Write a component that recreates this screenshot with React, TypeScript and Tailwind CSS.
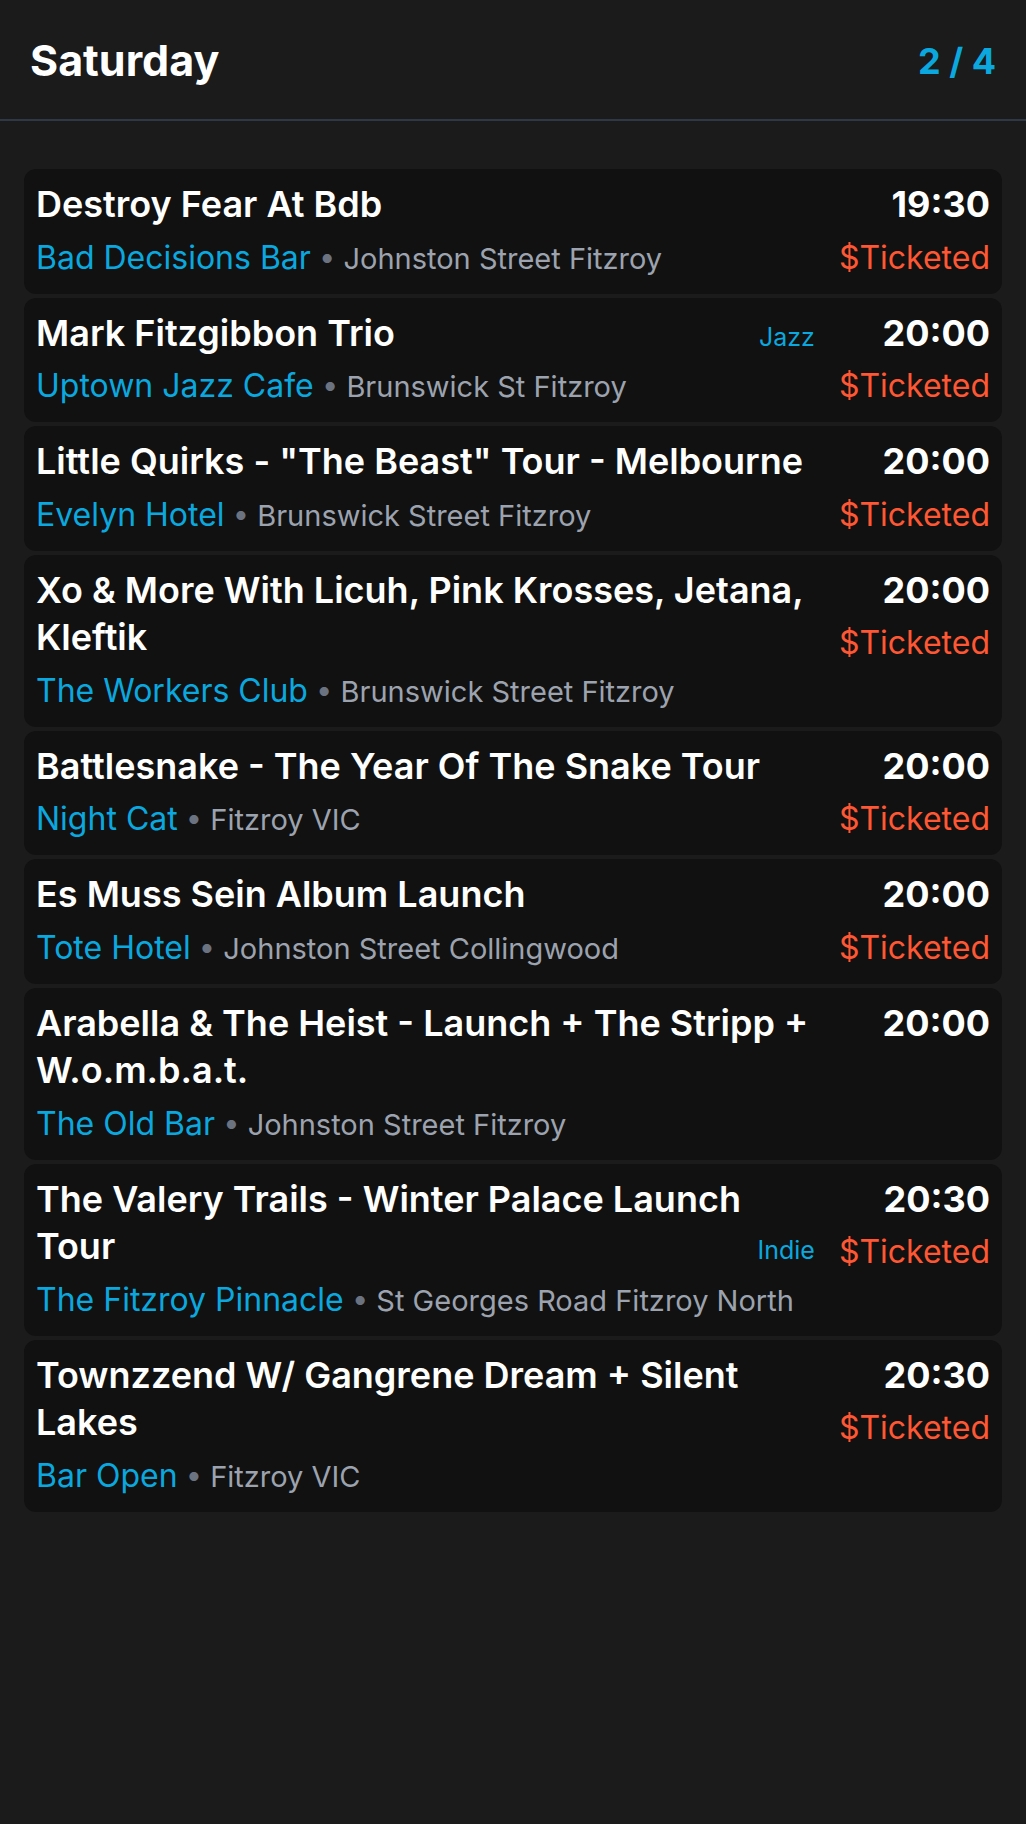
import React from "react";

interface Gig {
  title: string;
  venue: string;
  location: string;
  time: string;
  genre?: string;
  price?: string;
}

const gigs: Gig[] = [
  {
    title: "Destroy Fear At Bdb",
    venue: "Bad Decisions Bar",
    location: "Johnston Street Fitzroy",
    time: "19:30",
    price: "$Ticketed",
  },
  {
    title: "Mark Fitzgibbon Trio",
    venue: "Uptown Jazz Cafe",
    location: "Brunswick St Fitzroy",
    genre: "Jazz",
    time: "20:00",
    price: "$Ticketed",
  },
  {
    title: 'Little Quirks - "The Beast" Tour - Melbourne',
    venue: "Evelyn Hotel",
    location: "Brunswick Street Fitzroy",
    time: "20:00",
    price: "$Ticketed",
  },
  {
    title: "Xo & More With Licuh, Pink Krosses, Jetana, Kleftik",
    venue: "The Workers Club",
    location: "Brunswick Street Fitzroy",
    time: "20:00",
    price: "$Ticketed",
  },
  {
    title: "Battlesnake - The Year Of The Snake Tour",
    venue: "Night Cat",
    location: "Fitzroy VIC",
    time: "20:00",
    price: "$Ticketed",
  },
  {
    title: "Es Muss Sein Album Launch",
    venue: "Tote Hotel",
    location: "Johnston Street Collingwood",
    time: "20:00",
    price: "$Ticketed",
  },
  {
    title: "Arabella & The Heist - Launch + The Stripp + W.o.m.b.a.t.",
    venue: "The Old Bar",
    location: "Johnston Street Fitzroy",
    time: "20:00",
  },
  {
    title: "The Valery Trails - Winter Palace Launch Tour",
    venue: "The Fitzroy Pinnacle",
    location: "St Georges Road Fitzroy North",
    genre: "Indie",
    time: "20:30",
    price: "$Ticketed",
  },
  {
    title: "Townzzend W/ Gangrene Dream + Silent Lakes",
    venue: "Bar Open",
    location: "Fitzroy VIC",
    time: "20:30",
    price: "$Ticketed",
  },
];

function GigCard({ gig }: { gig: Gig }) {
  return (
    <div className="flex gap-6 rounded-xl bg-[#111111] px-3 pt-[12px] pb-[12px]">
      <div className="min-w-0 flex-1">
        <div className="flex items-end gap-3">
          <h3 className="flex-1 text-[36px] font-semibold leading-[47.5px] text-white">
            {gig.title}
          </h3>
          {gig.genre && (
            <span className="shrink-0 text-[25px] leading-[39.5px] text-[#0aa8df]">
              {gig.genre}
            </span>
          )}
        </div>
        <p className="mt-[5px] text-[32px] leading-[48px]">
          <span className="text-[#0aa8df]">{gig.venue}</span>
          <span className="text-[29px] leading-none text-[#6b7280]"> • </span>
          <span className="text-[29px] leading-none text-[#9ca3af]">
            {gig.location}
          </span>
        </p>
      </div>
      <div className="flex min-w-[148px] shrink-0 flex-col items-end text-right">
        <span className="text-[36px] font-bold leading-[47.5px] text-white">
          {gig.time}
        </span>
        {gig.price && (
          <span className="mt-[5px] text-[32px] leading-[48px] text-[#ff5733]">
            {gig.price}
          </span>
        )}
      </div>
    </div>
  );
}

export default function App() {
  return (
    <div className="min-h-screen bg-[#1b1b1b] font-['Inter','Noto_Sans',sans-serif]">
      <header className="flex h-[121px] items-center justify-between border-b-2 border-[#2e3846] px-[30px] pt-[2px]">
        <h1 className="text-[43px] font-bold text-white">Saturday</h1>
        <span className="text-[36px] font-bold text-[#0aa8df]">2 / 4</span>
      </header>

      <main className="flex flex-col gap-1 px-6 pt-[48px] pb-10">
        {gigs.map((gig) => (
          <GigCard key={gig.title} gig={gig} />
        ))}
      </main>
    </div>
  );
}
